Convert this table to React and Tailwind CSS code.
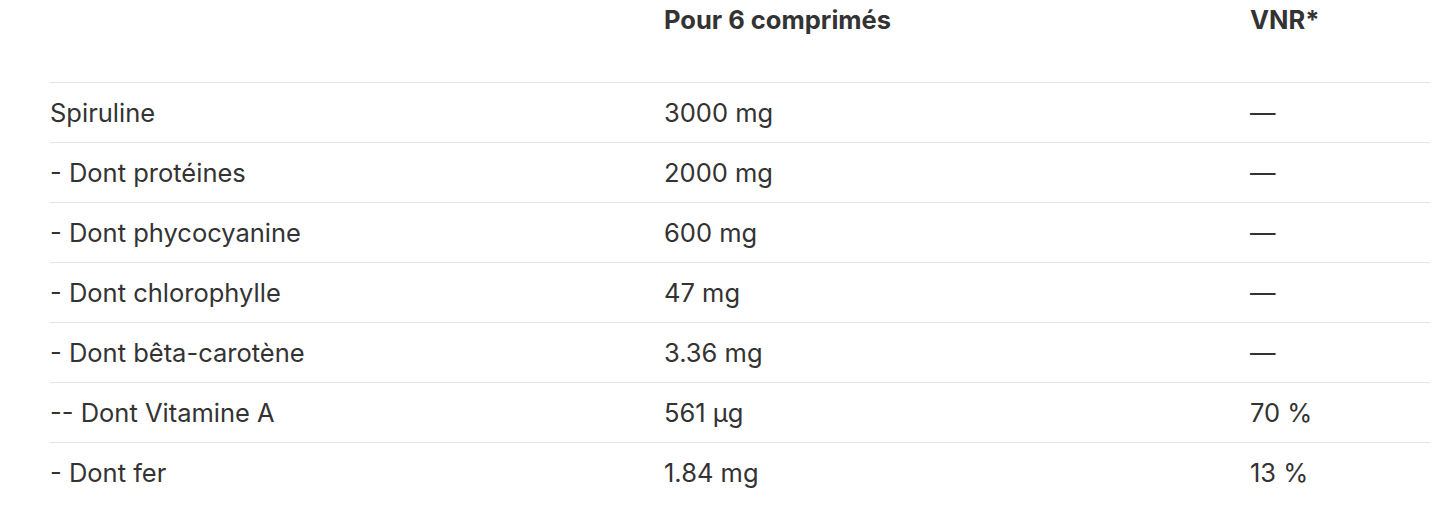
import React from 'react';

const rows = [
  { name: 'Spiruline', amount: '3000 mg', vnr: '—' },
  { name: '- Dont protéines', amount: '2000 mg', vnr: '—' },
  { name: '- Dont phycocyanine', amount: '600 mg', vnr: '—' },
  { name: '- Dont chlorophylle', amount: '47 mg', vnr: '—' },
  { name: '- Dont bêta-carotène', amount: '3.36 mg', vnr: '—' },
  { name: '-- Dont Vitamine A', amount: '561 µg', vnr: '70 %' },
  { name: '- Dont fer', amount: '1.84 mg', vnr: '13 %' },
];

const App = () => {
  return (
    <div className="w-[1445px] h-[518px] bg-white pl-[50px] text-[#333333] font-['Inter','Liberation_Sans',sans-serif] text-[25.5px]">
      <div className="w-[1380px]">
        {/* Header */}
        <div className="grid grid-cols-[614px_586px_180px] h-[83px] border-b border-[#e5e5e5] font-bold leading-[40px]">
          <div></div>
          <div>Pour 6 comprimés</div>
          <div>VNR*</div>
        </div>

        {/* Body */}
        {rows.map((row, i) => (
          <div
            key={i}
            className={`grid grid-cols-[614px_586px_180px] h-[60px] items-center leading-[60px] ${i < rows.length - 1 ? 'border-b border-[#e5e5e5]' : ''}`}
          >
            <div>{row.name}</div>
            <div>{row.amount}</div>
            <div>{row.vnr}</div>
          </div>
        ))}
      </div>
    </div>
  );
};

export default App;
